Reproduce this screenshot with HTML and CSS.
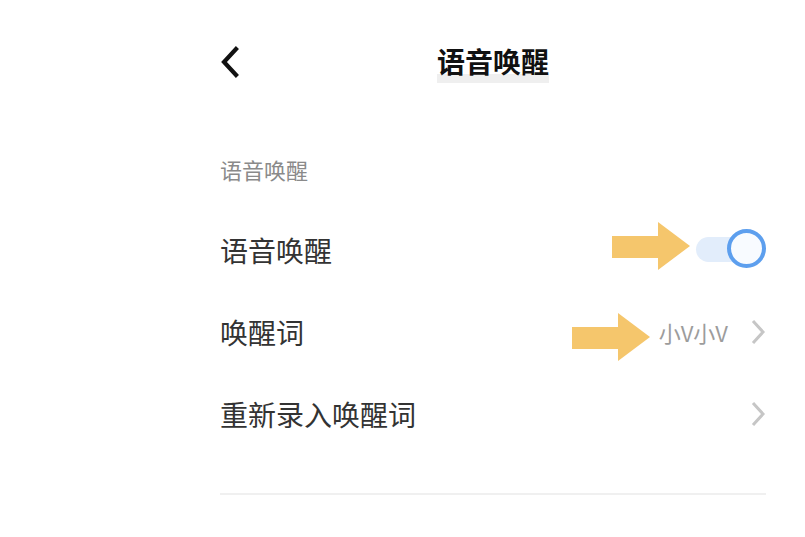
FILE: index.html
```html
<!DOCTYPE html>
<html lang="zh">
<head>
<meta charset="utf-8">
<title>语音唤醒</title>
<link rel="stylesheet" href="styles.css">
</head>
<body>
<div class="page">
  <header class="header">
    <div class="back">
      <svg width="20" height="32" viewBox="0 0 20 32"><polyline points="16,3 4,16 16,29" fill="none" stroke="#111" stroke-width="4.2" stroke-linecap="square" stroke-linejoin="miter"/></svg>
    </div>
    <h1 class="title">语音唤醒</h1>
    <div class="spacer"></div>
  </header>
  <div class="section-label">语音唤醒</div>
  <div class="row">
    <span class="row-text">语音唤醒</span>
    <div class="toggle"><span class="track"></span><span class="knob"></span></div>
    <svg class="pointer p1" width="78" height="48" viewBox="0 0 78 48"><polygon points="0,14 46,14 46,0 78,24 46,48 46,36 0,36" fill="#f5c66c"/></svg>
  </div>
  <div class="row">
    <span class="row-text">唤醒词</span>
    <div class="row-end">
      <span class="value">小V小V</span>
      <svg class="chev" width="16" height="26" viewBox="0 0 16 26"><polyline points="3,2 13,13 3,24" fill="none" stroke="#c6c6c6" stroke-width="3"/></svg>
    </div>
    <svg class="pointer p2" width="78" height="48" viewBox="0 0 78 48"><polygon points="0,14 46,14 46,0 78,24 46,48 46,36 0,36" fill="#f5c66c"/></svg>
  </div>
  <div class="row">
    <span class="row-text">重新录入唤醒词</span>
    <div class="row-end">
      <svg class="chev" width="16" height="26" viewBox="0 0 16 26"><polyline points="3,2 13,13 3,24" fill="none" stroke="#c6c6c6" stroke-width="3"/></svg>
    </div>
  </div>
  <div class="divider"></div>
</div>
</body>
</html>
```
FILE: styles.css
```css
html, body {
  margin: 0;
  padding: 0;
  background: #fff;
}
body {
  font-family: "Noto Sans CJK SC", "Noto Sans", sans-serif;
}
.page {
  width: 546px;
  margin-left: 220px;
}
.header {
  height: 124px;
  display: grid;
  grid-template-columns: 1fr auto 1fr;
  align-items: center;
}
.back {
  display: flex;
  align-items: center;
  height: 32px;
}
.back svg {
  display: block;
}
.title {
  margin: 0;
  font-size: 28px;
  font-weight: 700;
  color: #111;
  line-height: 28px;
  padding-bottom: 8px;
  margin-top: 6px;
  background: linear-gradient(to bottom, transparent 0, transparent 27px, #efefef 27px, #efefef 100%);
}
.section-label {
  margin-top: 30px;
  height: 30px;
  line-height: 30px;
  font-size: 22px;
  color: #8a8a8a;
}
.row {
  position: relative;
  height: 82px;
  display: flex;
  align-items: center;
  justify-content: space-between;
}
.section-label + .row {
  margin-top: 25px;
}
.row-text {
  font-size: 28px;
  color: #333;
  line-height: 32px;
}
.row-end {
  display: flex;
  align-items: center;
  gap: 22px;
}
.value {
  font-size: 22px;
  color: #9c9c9c;
  line-height: 26px;
}
.chev {
  display: block;
}
.toggle {
  position: relative;
  width: 70px;
  height: 40px;
  margin-top: -2px;
}
.track {
  position: absolute;
  left: 0;
  top: 8px;
  width: 56px;
  height: 25px;
  border-radius: 13px;
  background: #e2edfb;
}
.knob {
  position: absolute;
  right: 0;
  top: 0;
  width: 31px;
  height: 31px;
  border-radius: 50%;
  border: 4.5px solid #5d9fee;
  background: #f8fbff;
}
.pointer {
  position: absolute;
}
.p1 {
  left: 392px;
  top: 13px;
}
.p2 {
  left: 352px;
  top: 22px;
}
.divider {
  margin-top: 38px;
  height: 2px;
  background: #f0f0f0;
}
```
